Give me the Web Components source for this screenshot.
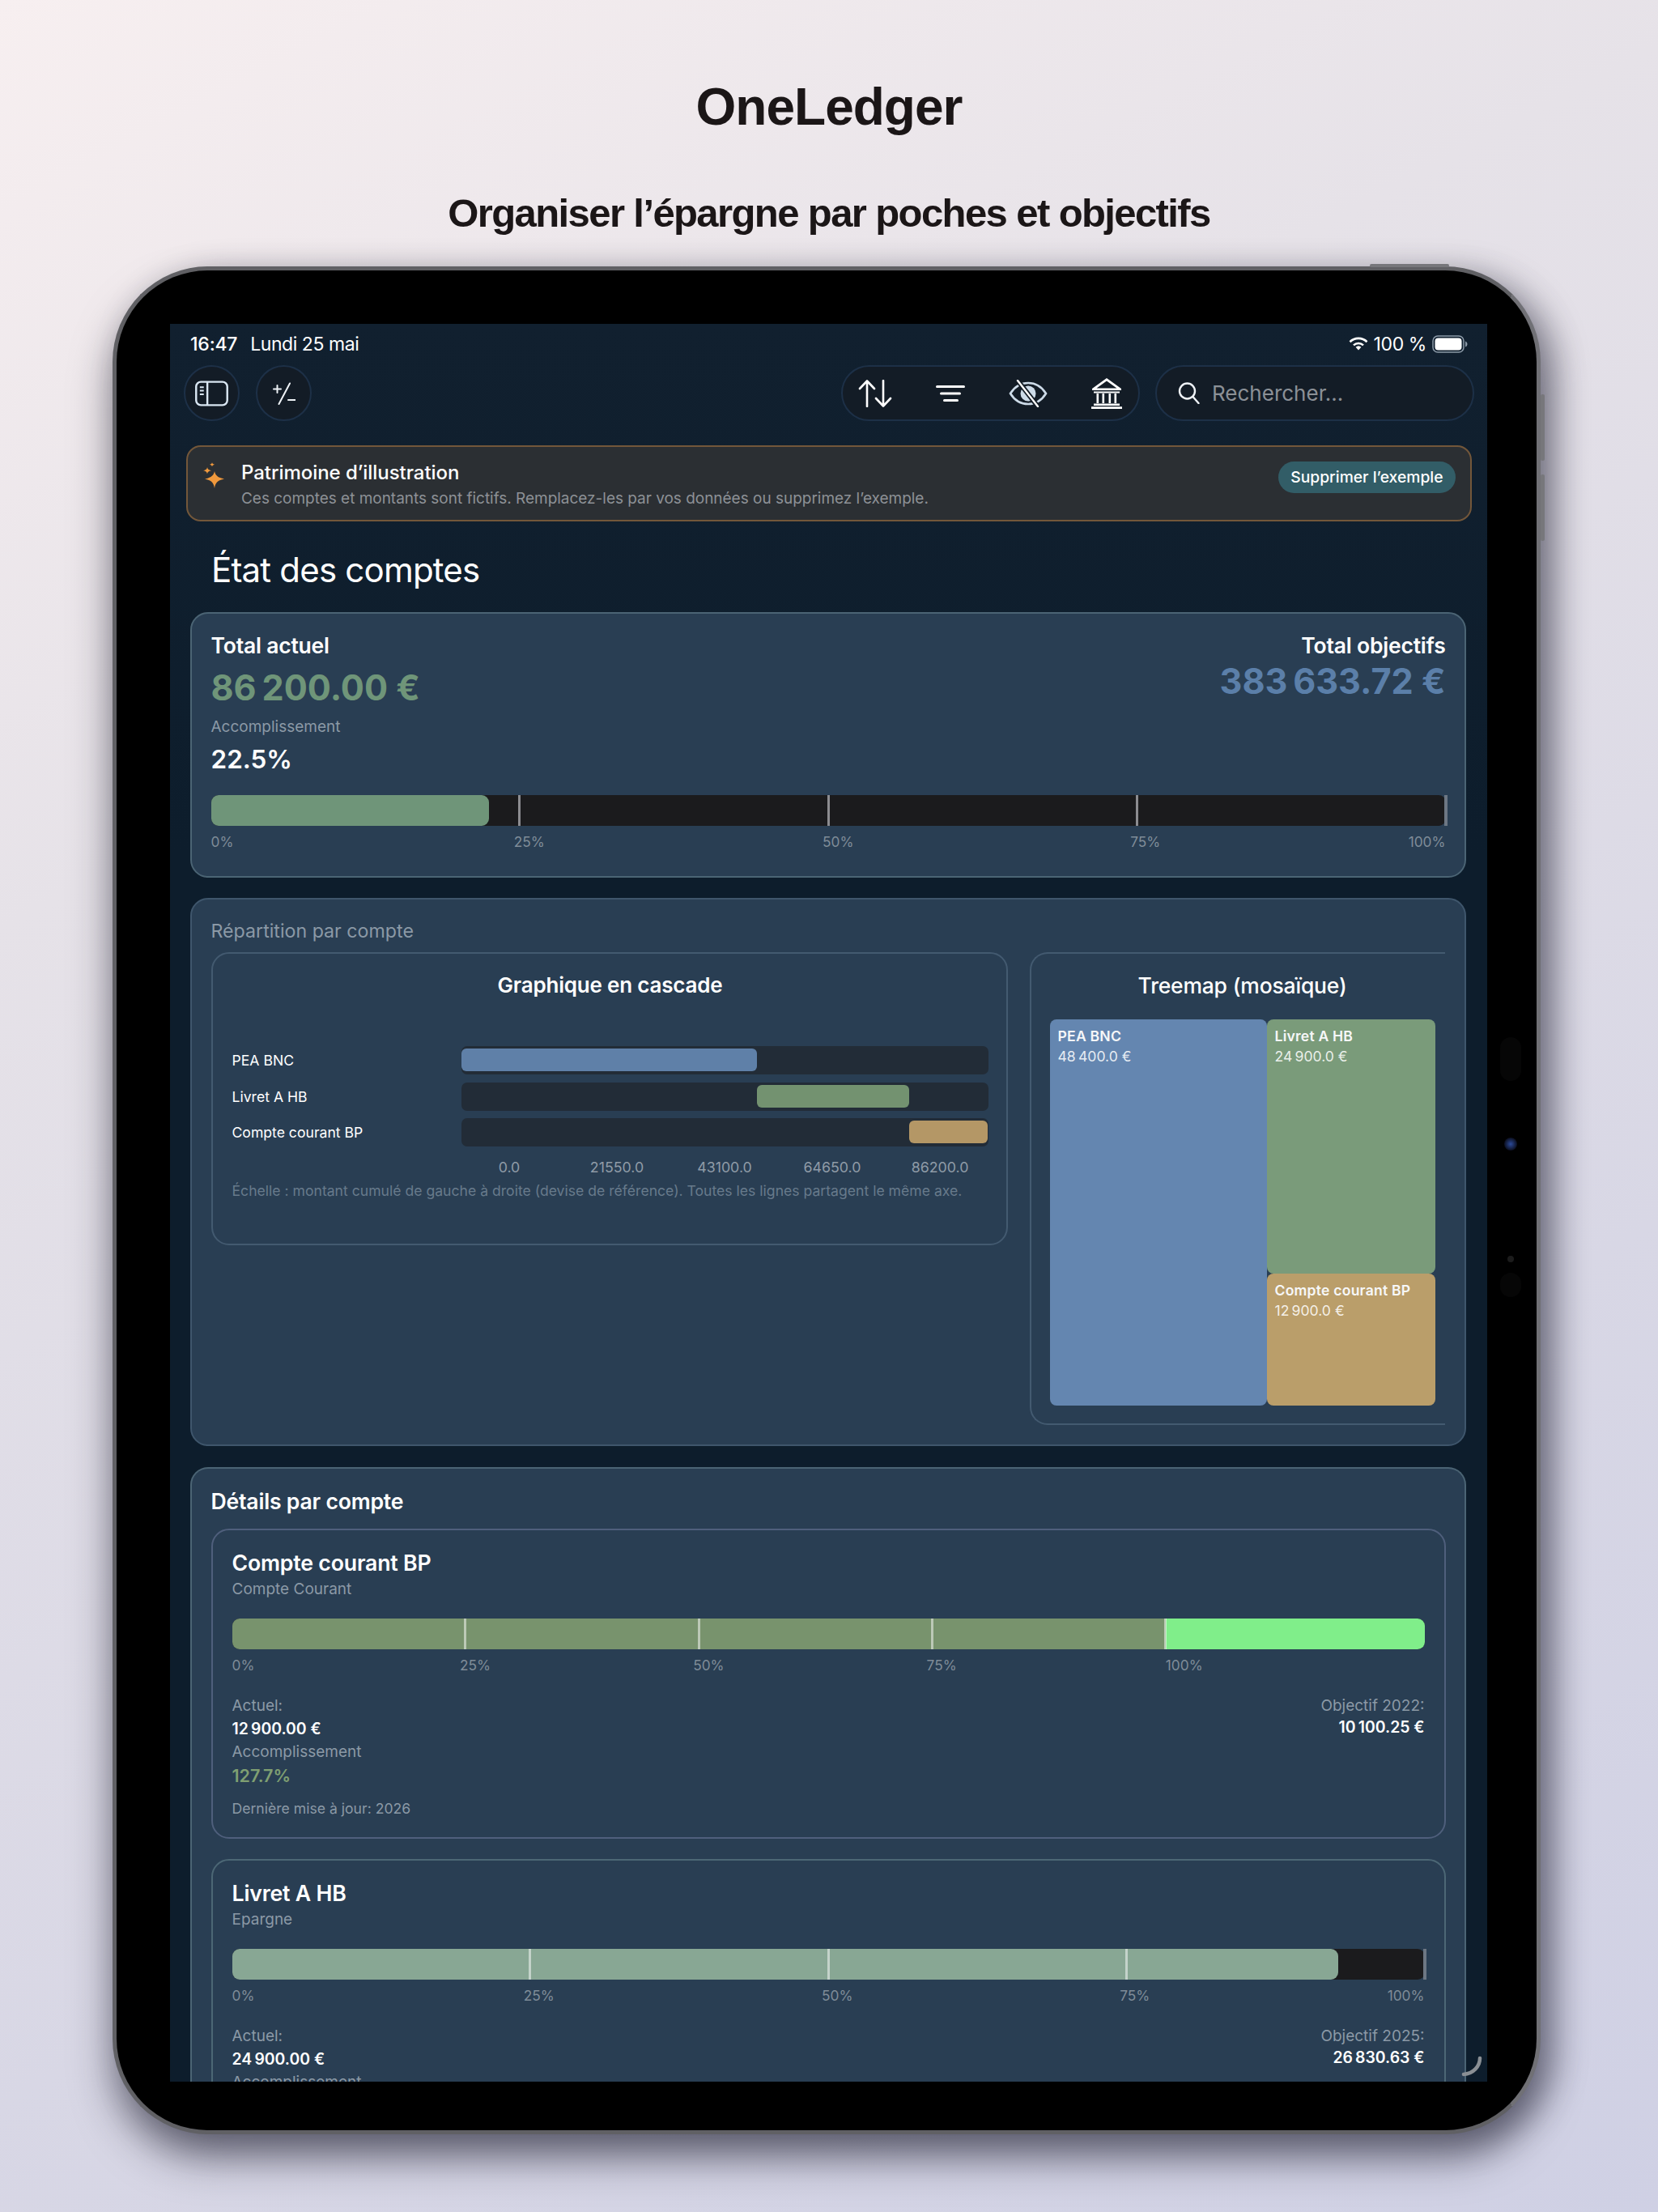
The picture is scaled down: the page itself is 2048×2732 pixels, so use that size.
<!DOCTYPE html>
<html lang="fr">
<head>
<meta charset="utf-8">
<title>OneLedger</title>
<style>
  html, body { margin: 0; padding: 0; }
  body {
    width: 2048px;
    height: 2732px;
    overflow: hidden;
    background: linear-gradient(152deg, #f7eff0 0%, #e6e2e8 30%, #d8d7e5 68%, #cfd0e4 100%);
    font-family: Inter, "Noto Sans", sans-serif;
  }
</style>
</head>
<body>
<hero-title heading="OneLedger" sub="Organiser l’épargne par poches et objectifs"></hero-title>
<device-frame>
  <status-bar></status-bar>
  <tool-bar></tool-bar>
  <demo-banner></demo-banner>
  <page-heading>État des comptes</page-heading>
  <summary-card></summary-card>
  <split-card></split-card>
  <details-card>
    <account-card name="Compte courant BP" kind="Compte Courant" actual="12 900.00 €" target-label="Objectif 2022:" target="10 100.25 €"
      rate="127.7%" updated="Dernière mise à jour: 2026" fill="78.3" over="1" color="#78936d" edge="#4f5f7c"
      marks="0:0%:0 19.58:25%:-7 39.15:50%:-7 58.73:75%:-7 78.3:100%:0"></account-card>
    <account-card name="Livret A HB" kind="Epargne" actual="24 900.00 €" target-label="Objectif 2025:" target="26 830.63 €"
      rate="92.8%" updated="Dernière mise à jour: 2026" fill="92.8" color="#88a794" edge="#4c6775"
      marks="0:0%:0 25:25%:-8 50:50%:-8 75:75%:-8 100:100%:r"></account-card>
  </details-card>
</device-frame>

<script>
const NB = '\u202f';

function shadowOf(host, html) {
  const shadow = host.attachShadow({ mode: 'open' });
  shadow.innerHTML = html;
  return shadow;
}

class HeroTitle extends HTMLElement {
  connectedCallback() {
    if (this.shadowRoot) return;
    shadowOf(this, `
      <style>
        :host { display: block; height: 329px; text-align: center; color: #1b1617; font-family: "Liberation Sans", Inter, sans-serif; font-weight: 700; }
        h1 { margin: 0; padding-top: 93px; font-size: 64px; line-height: 78px; letter-spacing: -1px; }
        h2 { margin: 0; padding-top: 62px; font-size: 49px; line-height: 60px; letter-spacing: -1.6px; }
      </style>
      <h1>${this.getAttribute('heading')}</h1>
      <h2>${this.getAttribute('sub')}</h2>`);
  }
}

class DeviceFrame extends HTMLElement {
  connectedCallback() {
    if (this.shadowRoot) return;
    shadowOf(this, `
      <style>
        :host {
          display: block;
          box-sizing: border-box;
          position: relative;
          width: 1764px;
          height: 2307px;
          margin-left: 139px;
          padding: 66px 61px 60px 66px;
          background: #000;
          border: 5px solid #606064;
          border-right-color: #707075;
          border-radius: 118px;
          box-shadow: 18px 10px 40px rgba(40, 40, 60, .4), 0 30px 50px rgba(30, 30, 45, .5);
        }
        .screen {
          height: 100%;
          overflow: hidden;
          position: relative;
          display: flex;
          flex-direction: column;
          background: linear-gradient(180deg, #11202f, #0d1d2c 30%, #0d1d2c);
          color: #fff;
        }
        .btn { position: absolute; background: #77777b; border-radius: 2px; }
        .top { left: 1548px; top: -8px; width: 98px; height: 4px; }
        .vol1 { left: 1759px; top: 153px; width: 5px; height: 82px; }
        .vol2 { left: 1759px; top: 252px; width: 5px; height: 82px; }
        .cam { position: absolute; border-radius: 50%; left: 1714px; background: radial-gradient(#2c4a9a, #0b0f20 70%); }
        .pill { position: absolute; left: 1709px; width: 26px; height: 54px; border-radius: 13px; background: #060606; }
        .grip { position: absolute; right: 6px; bottom: 6px; }
      </style>
      <i class="btn top"></i><i class="btn vol1"></i><i class="btn vol2"></i>
      <i class="pill" style="top:947px"></i>
      <i class="cam" style="top:1071px;width:16px;height:16px"></i>
      <i class="cam" style="top:1217px;left:1718px;width:8px;height:8px;background:#1c1c1c"></i>
      <i class="pill" style="top:1238px;height:30px;border-radius:15px"></i>
      <div class="screen">
        <slot></slot>
        <svg class="grip" width="26" height="26" viewBox="0 0 26 26" fill="none"><path d="M23 3c0 10-8 19-20 20" stroke="#8a8f94" stroke-width="4.500" stroke-linecap="round"/></svg>
      </div>`);
  }
}

class StatusBar extends HTMLElement {
  connectedCallback() {
    if (this.shadowRoot) return;
    shadowOf(this, `
      <style>
        :host { display: flex; flex: none; align-items: center; height: 51px; padding: 0 24px 2px 25px; box-sizing: border-box; font-size: 23px; font-weight: 500; color: #fff; letter-spacing: -.2px; }
        .date { margin-left: 16px; letter-spacing: -.45px; font-weight: 400; }
        .right { margin-left: auto; display: flex; align-items: center; gap: 7px; }
        .pct { letter-spacing: -.4px; font-weight: 400; }
      </style>
      <span>16:47</span><span class="date">Lundi 25 mai</span>
      <span class="right">
        <svg width="24" height="17" viewBox="0 0 24 17" fill="none" stroke="#fff" stroke-width="2.600"><path d="M1.500 6.200a15 15 0 0 1 21 0"/><path d="M6 10.400a8.800 8.800 0 0 1 12 0"/><path d="M12 16.500 8.600 12.800a5 5 0 0 1 6.800 0z" fill="#fff" stroke="none"/></svg>
        <span class="pct">100 %</span>
        <svg width="44" height="22" viewBox="0 0 44 22" style="margin-left:0"><rect x="1" y="1" width="38" height="20" rx="6" fill="none" stroke="#8c9aa8" stroke-width="1.500"/><rect x="3.500" y="3.500" width="33" height="15" rx="4" fill="#fff"/><path d="M41 7.500c1.500.5 2.500 2 2.500 3.500s-1 3-2.500 3.500z" fill="#8c9aa8"/></svg>
      </span>`);
  }
}

class ToolBar extends HTMLElement {
  connectedCallback() {
    if (this.shadowRoot) return;
    shadowOf(this, `
      <style>
        :host { display: flex; flex: none; height: 69px; padding: 0 16px 0 17px; gap: 20px; align-items: stretch; }
        .glass { box-sizing: border-box; background: #131c26; border: 2px solid #1d3047; display: flex; align-items: center; }
        .circle { width: 69px; border-radius: 50%; justify-content: center; }
        .group { margin-left: auto; width: 369px; border-radius: 35px; padding-left: 19px; }
        .group svg { flex: none; }
        .search { width: 394px; border-radius: 35px; margin-left: -1px; padding-left: 26px; gap: 15px; color: #8b9096; font-size: 26px; }
        svg { display: block; }
      </style>
      <div class="glass circle">
        <svg width="41" height="32" viewBox="0 0 42 32" fill="none" stroke="#d9e6f2" stroke-width="2.500"><rect x="1.300" y="1.300" width="39.400" height="29.400" rx="6"/><path d="M15.500 1.300v29.400"/><path d="M6 8h5M6 12.500h5M6 17h5" stroke-width="2"/></svg>
      </div>
      <div class="glass circle">
        <svg width="28" height="28" viewBox="0 0 28 28" fill="none" stroke="#eef2f6" stroke-linecap="round"><path d="M1 8.500h9M5.500 4v9" stroke-width="2"/><path d="M21 1.500 7.500 27" stroke-width="2"/><path d="M19 22h9" stroke-width="2"/></svg>
      </div>
      <div class="glass group">
        <svg width="42" height="34" viewBox="0 0 42 34" fill="none" stroke="#fff" stroke-width="2.600" stroke-linecap="round" stroke-linejoin="round"><path d="M11 33V2M2 11l9-9.500L20 11"/><path d="M31 1v31M22 23l9 9.500L40 23"/></svg>
        <svg width="36" height="20" viewBox="0 0 36 20" style="margin-left:54px" fill="#fff"><rect x="0" y="0" width="36" height="3" rx="1.500"/><rect x="5" y="8.500" width="26" height="3" rx="1.500"/><rect x="9" y="17" width="19" height="3" rx="1.500"/></svg>
        <svg width="48" height="34" viewBox="0 0 48 34" style="margin-left:54px" fill="none"><path d="M2 17C7 9 14 4 24 4s17 5 22 13c-5 8-12 13-22 13S7 25 2 17z" stroke="#cddbe8" stroke-width="2.600"/><circle cx="24" cy="17" r="9.500" fill="#cddbe8"/><path d="M11 1l25 32" stroke="#131c26" stroke-width="6"/><path d="M11 1l25 32" stroke="#fff" stroke-width="2.400" stroke-linecap="round"/></svg>
        <svg width="38" height="38" viewBox="0 0 38 38" style="margin-left:54px" fill="#fff"><path d="M19 0 37 13v2H1v-2zm0 3.500L6.500 12.500h25z" fill-rule="evenodd"/><path d="M3 16.500h32v2H3z"/><path d="M6.500 19h2.600v12H6.500zM13.500 19h2.600v12h-2.600zM21.500 19h2.600v12h-2.600zM28.500 19h2.600v12h-2.600z"/><path d="M3 31.500h32v2.500H3zM0 35.200h38V38H0z"/></svg>
      </div>
      <div class="glass search">
        <svg width="27" height="27" viewBox="0 0 27 27" fill="none" stroke="#eef2f6" stroke-width="2.400" stroke-linecap="round"><circle cx="11.500" cy="11" r="9.500"/><path d="M18.500 18 25.500 26"/></svg>
        <span>Rechercher...</span>
      </div>`);
  }
}

class DemoBanner extends HTMLElement {
  connectedCallback() {
    if (this.shadowRoot) return;
    shadowOf(this, `
      <style>
        :host { display: flex; flex: none; box-sizing: border-box; height: 94px; margin: 30px 19px 0 20px; padding: 16.500px 18px 0 19px; background: #2b2f33; border: 2px solid #73573a; border-radius: 18px; }
        svg { flex: none; margin-top: 2px; }
        .text { margin-left: 21px; flex: 1; }
        .title { font-size: 24px; line-height: 30px; font-weight: 500; letter-spacing: -.05px; }
        .sub { margin-top: 2px; font-size: 19px; line-height: 30px; color: #8d9196; letter-spacing: -.02px; }
        .btn { flex: none; margin-top: 1px; height: 39px; padding: 0 15.500px; border-radius: 20px; background: #325d67; font-size: 19.300px; font-weight: 500; line-height: 39px; }
      </style>
      <svg width="26" height="32" viewBox="0 0 26 32" fill="#f0993d"><path d="M14 11c1 5 4 8 12 9.500-8 1.500-11 4.500-12 11.500-1-7-4-10-12-11.500 8-1.500 11-4.500 12-9.500z"/><path d="M5 6c.4 2.400 1.500 3.500 5 4.200-3.500.7-4.600 1.800-5 4.300-.4-2.500-1.500-3.600-5-4.300 3.500-.7 4.600-1.800 5-4.200z"/><path d="M11 0c.2 1.500 1 2.200 3 2.700-2 .4-2.800 1.200-3 2.800-.2-1.600-1-2.400-3-2.800 2-.5 2.800-1.200 3-2.700z"/></svg>
      <div class="text">
        <div class="title">Patrimoine d’illustration</div>
        <div class="sub">Ces comptes et montants sont fictifs. Remplacez-les par vos données ou supprimez l’exemple.</div>
      </div>
      <div class="btn">Supprimer l’exemple</div>`);
  }
}

class PageHeading extends HTMLElement {
  connectedCallback() {
    if (this.shadowRoot) return;
    shadowOf(this, `
      <style>
        :host { display: block; flex: none; margin: 30px 0 22px; padding-left: 51px; font-size: 42px; line-height: 60px; font-weight: 400; letter-spacing: -.8px; }
      </style>
      <slot></slot>`);
  }
}

// barre + reperes ; marks = "position:texte:decalage" separes par des espaces
class GoalBar extends HTMLElement {
  connectedCallback() {
    if (this.shadowRoot) return;
    const fill = this.getAttribute('fill');
    const color = this.getAttribute('color');
    const over = this.hasAttribute('over');
    const tickColor = this.getAttribute('tick') || 'rgba(255,255,255,.5)';
    const marks = this.getAttribute('marks').split(' ').map((m) => m.split(':'));
    const ticks = marks.filter((m) => m[0] !== '0').map((m) => {
      const end = m[0] === '100';
      return `<i class="tick" style="left:${m[0]}%;background:${end ? '#6d7783' : tickColor};${end ? 'width:4px' : ''}"></i>`;
    }).join('');
    const labels = marks.map((m) => {
      const pos = m[2] === 'r' ? 'right:0' : `left:calc(${m[0]}% + ${m[2]}px)`;
      return `<span style="${pos}">${m[1]}</span>`;
    }).join('');
    shadowOf(this, `
      <style>
        :host { display: block; }
        .track { position: relative; height: 38px; background: #1b1b1d; border-radius: 9px; }
        .fill { position: absolute; left: 0; top: 0; bottom: 0; border-radius: 9px; }
        .rest { position: absolute; right: 0; top: 0; bottom: 0; background: #80ee8a; border-radius: 0 9px 9px 0; }
        .tick { position: absolute; top: 0; bottom: 0; width: 3px; margin-left: -1.500px; }
        .axis { position: relative; height: 22px; margin-top: 9px; font-size: 17.300px; line-height: 22px; color: #7f8c98; }
        .axis span { position: absolute; top: 0; }
      </style>
      <div class="track">
        ${over ? `<div class="rest" style="left:${fill}%"></div>` : ''}
        <div class="fill" style="width:${fill}%;background:${color};${over ? 'border-radius:9px 0 0 9px' : ''}"></div>
        ${ticks}
      </div>
      <div class="axis">${labels}</div>`);
  }
}

class SummaryCard extends HTMLElement {
  connectedCallback() {
    if (this.shadowRoot) return;
    shadowOf(this, `
      <style>
        :host { display: block; flex: none; box-sizing: border-box; height: 328px; margin: 0 26px 0 25px; padding: 22px 23.500px 0; background: #293e53; border: 2px solid #4b6474; border-radius: 22px; }
        .top { display: flex; justify-content: space-between; }
        .cap { font-size: 26.500px; line-height: 34px; font-weight: 600; letter-spacing: -.2px; }
        .amount { margin-top: 7px; font-size: 43.200px; line-height: 56px; font-weight: 700; color: #6f9579; }
        .muted { margin-top: 8px; font-size: 19px; line-height: 26px; color: #8b99a6; }
        .rate { margin-top: 7px; font-size: 31.500px; line-height: 40px; font-weight: 600; }
        .right { text-align: right; }
        .goal { margin-top: 1px; font-size: 43.200px; line-height: 52px; font-weight: 700; color: #5b7fa9; }
        goal-bar { margin-top: 24px; }
      </style>
      <div class="top">
        <div>
          <div class="cap">Total actuel</div>
          <div class="amount">86${NB}200.00 €</div>
          <div class="muted">Accomplissement</div>
          <div class="rate">22.5%</div>
        </div>
        <div class="right">
          <div class="cap">Total objectifs</div>
          <div class="goal">383${NB}633.72 €</div>
        </div>
      </div>
      <goal-bar fill="22.5" color="#6f9579" tick="#8c8c90" marks="0:0%:0 25:25%:-7 50:50%:-7 75:75%:-8 100:100%:r"></goal-bar>`);
  }
}

class WaterfallChart extends HTMLElement {
  connectedCallback() {
    if (this.shadowRoot) return;
    const rows = [
      ['PEA BNC', 0, 56.15, '#5f80a8'],
      ['Livret A HB', 56.15, 28.89, '#739270'],
      ['Compte courant BP', 85.04, 14.96, '#b49766'],
    ].map(([name, from, width, color]) => `
      <div class="row"><span class="name">${name}</span>
        <div class="track"><div class="bar" style="margin-left:${from}%;width:${width}%;background:${color}"></div></div>
      </div>`).join('');
    shadowOf(this, `
      <style>
        :host { display: block; box-sizing: border-box; height: 362px; padding: 22px 22px 0 24px; border: 2px solid #435a70; border-radius: 22px; }
        h3 { margin: 0; text-align: center; font-size: 26px; line-height: 34px; font-weight: 600; letter-spacing: -.2px; }
        .rows { display: flex; flex-direction: column; gap: 9.500px; margin-top: 58px; }
        .row { display: flex; align-items: center; font-size: 17.600px; }
        .name { flex: none; width: 283px; }
        .track { flex: 1; box-sizing: border-box; height: 35px; padding: 3px 0 4px; background: #222c37; border-radius: 7px; }
        .bar { height: 100%; border-radius: 6px; }
        .axis { display: grid; grid-template-columns: repeat(5, 133px); margin: 15px 0 0 276px; text-align: center; font-size: 17.800px; line-height: 22px; color: #8f9ba7; }
        .note { margin-top: 6px; font-size: 17.600px; line-height: 24px; color: #677a8b; }
      </style>
      <h3>Graphique en cascade</h3>
      <div class="rows">${rows}</div>
      <div class="axis"><span>0.0</span><span>21550.0</span><span>43100.0</span><span>64650.0</span><span>86200.0</span></div>
      <div class="note">Échelle : montant cumulé de gauche à droite (devise de référence). Toutes les lignes partagent le même axe.</div>`);
  }
}

class TreeMap extends HTMLElement {
  connectedCallback() {
    if (this.shadowRoot) return;
    shadowOf(this, `
      <style>
        :host { display: block; box-sizing: border-box; height: 584px; padding: 22px 11px 0 23px; border: 2px solid #435a70; border-right: 0; border-radius: 22px 0 0 22px; }
        h3 { margin: 0; width: 476px; text-align: center; font-size: 26.500px; line-height: 34px; font-weight: 500; letter-spacing: -.2px; }
        .map { display: grid; grid-template-columns: 268px 208px; grid-template-rows: 314px 163px; width: 476px; margin-top: 25px; }
        .cell { border-radius: 8px; padding: 8px 10px; font-size: 17.600px; line-height: 25px; color: rgba(255,255,255,.86); box-sizing: border-box; }
        .cell b { display: block; font-weight: 600; color: #f6f7f8; letter-spacing: .2px; }
        .a { grid-row: 1 / 3; background: #6486b0; }
        .b { background: #7a9b7a; }
        .c { background: #ba9e6a; }
      </style>
      <h3>Treemap (mosaïque)</h3>
      <div class="map">
        <div class="cell a"><b>PEA BNC</b>48${NB}400.0 €</div>
        <div class="cell b"><b>Livret A HB</b>24${NB}900.0 €</div>
        <div class="cell c"><b>Compte courant BP</b>12${NB}900.0 €</div>
      </div>`);
  }
}

class SplitCard extends HTMLElement {
  connectedCallback() {
    if (this.shadowRoot) return;
    shadowOf(this, `
      <style>
        :host { display: block; flex: none; box-sizing: border-box; height: 677px; margin: 25px 26px 0 25px; padding: 25px 23.500px 0; background: #293e53; border: 2px solid #3f566c; border-radius: 22px; overflow: hidden; }
        h3 { margin: 0; font-size: 23.200px; line-height: 28px; font-weight: 400; color: #8b99a6; }
        .cols { display: flex; gap: 27px; margin-top: 12px; width: 1524px; overflow: hidden; }
        waterfall-chart { flex: none; width: 984px; }
        tree-map { flex: none; width: 530px; }
      </style>
      <h3>Répartition par compte</h3>
      <div class="cols"><waterfall-chart></waterfall-chart><tree-map></tree-map></div>`);
  }
}

class DetailsCard extends HTMLElement {
  connectedCallback() {
    if (this.shadowRoot) return;
    shadowOf(this, `
      <style>
        :host { display: block; flex: none; box-sizing: border-box; margin: 26px 26px 0 25px; padding: 22px 23.500px 0; background: #293e53; border: 2px solid #4b6474; border-bottom: 0; border-radius: 22px 22px 0 0; }
        h3 { margin: 0; font-size: 26.600px; line-height: 36px; font-weight: 600; letter-spacing: -.2px; }
        .list { display: flex; flex-direction: column; gap: 25px; margin-top: 16px; }
      </style>
      <h3>Détails par compte</h3>
      <div class="list"><slot></slot></div>`);
  }
}

class AccountCard extends HTMLElement {
  connectedCallback() {
    if (this.shadowRoot) return;
    const a = (name) => this.getAttribute(name);
    const nb = (text) => text.replace(' ', NB);
    shadowOf(this, `
      <style>
        :host { display: block; box-sizing: border-box; height: 383px; padding: 23px 24px 0; border: 2px solid var(--edge); border-radius: 22px; }
        .name { font-size: 26.700px; line-height: 34px; font-weight: 600; letter-spacing: -.2px; }
        .kind { margin-top: 2.500px; font-size: 19px; line-height: 26px; color: #8b99a6; }
        goal-bar { margin-top: 23.500px; }
        .facts { display: flex; justify-content: space-between; margin-top: 26px; font-size: 19px; color: #8b99a6; }
        .line { line-height: 26px; }
        .left .line { margin-bottom: 3px; }
        .left .line:first-child { margin-bottom: 2px; }
        .val { color: #fff; font-weight: 600; font-size: 19.400px; }
        .rate { color: #7f9f72; font-weight: 600; font-size: 21.500px; }
        .upd { margin-top: 16px; font-size: 17.600px; line-height: 24px; }
        .right { text-align: right; }
      </style>
      <div class="name">${a('name')}</div>
      <div class="kind">${a('kind')}</div>
      <goal-bar fill="${a('fill')}" color="${a('color')}" marks="${a('marks')}" ${a('over') ? 'over' : ''}></goal-bar>
      <div class="facts">
        <div class="left">
          <div class="line">Actuel:</div>
          <div class="line val">${nb(a('actual'))}</div>
          <div class="line">Accomplissement</div>
          <div class="line rate">${a('rate')}</div>
          <div class="upd">${a('updated')}</div>
        </div>
        <div class="right">
          <div class="line">${a('target-label')}</div>
          <div class="line val">${nb(a('target'))}</div>
        </div>
      </div>`);
    this.style.setProperty('--edge', a('edge'));
  }
}

customElements.define('hero-title', HeroTitle);
customElements.define('device-frame', DeviceFrame);
customElements.define('status-bar', StatusBar);
customElements.define('tool-bar', ToolBar);
customElements.define('demo-banner', DemoBanner);
customElements.define('page-heading', PageHeading);
customElements.define('goal-bar', GoalBar);
customElements.define('summary-card', SummaryCard);
customElements.define('waterfall-chart', WaterfallChart);
customElements.define('tree-map', TreeMap);
customElements.define('split-card', SplitCard);
customElements.define('details-card', DetailsCard);
customElements.define('account-card', AccountCard);
</script>
</body>
</html>
